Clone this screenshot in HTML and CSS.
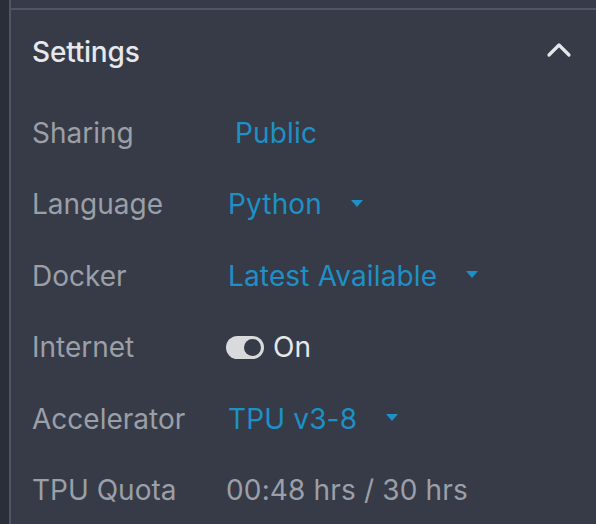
FILE: index.html
```html
<!DOCTYPE html>
<html>
<head>
<meta charset="utf-8">
<link rel="stylesheet" href="styles.css">
</head>
<body>
<div class="layout">
  <div class="rail"></div>
  <div class="panel">
    <div class="topgap"></div>
    <section class="settings">
      <header class="head">
        <h2 class="title">Settings</h2>
        <svg class="chev" width="26" height="18" viewBox="0 0 26 18"><path d="M3 14 L13 4 L23 14" fill="none" stroke="#e4e6ea" stroke-width="3.2" stroke-linecap="round" stroke-linejoin="round"/></svg>
      </header>
      <div class="rows">
        <div class="row"><span class="label">Sharing</span><span class="value link pub">Public</span></div>
        <div class="row"><span class="label">Language</span><span class="value link">Python<span class="caret"></span></span></div>
        <div class="row"><span class="label">Docker</span><span class="value link">Latest Available<span class="caret"></span></span></div>
        <div class="row"><span class="label">Internet</span><span class="value toggle-wrap"><span class="toggle"><span class="knob"></span></span><span class="on">On</span></span></div>
        <div class="row"><span class="label">Accelerator</span><span class="value link">TPU v3-8<span class="caret"></span></span></div>
        <div class="row"><span class="label">TPU Quota</span><span class="value plain">00:48 hrs / 30 hrs</span></div>
      </div>
    </section>
  </div>
</div>
</body>
</html>
```
FILE: styles.css
```css
html, body { margin: 0; padding: 0; }
body {
  background: #363b47;
  font-family: Inter, "Noto Sans", sans-serif;
  width: 596px; height: 524px; overflow: hidden;
}
.layout { display: flex; height: 524px; }
.rail { width: 9px; background: #2a2e38; flex: none; }
.panel { flex: 1; border-left: 2px solid #4f5564; background: #363b47; }
.topgap { height: 8px; }
.settings { border-top: 2px solid #4f5564; }
.head {
  display: flex; align-items: center; justify-content: space-between;
  padding: 25px 24px 0 21px; height: 34px;
}
.title { margin: 0; font-size: 28px; line-height: 34px; font-weight: 500; color: #e6e8eb; letter-spacing: -0.2px; }
.chev { margin-top: -4px; }
.rows { padding: 28px 0 0 21px; display: flex; flex-direction: column; }
.row { display: flex; align-items: center; height: 71.5px; }
.label { width: 196px; font-size: 28px; line-height: 34px; color: #9b9fa8; flex: none; }
.value { font-size: 28px; line-height: 34px; display: flex; align-items: center; letter-spacing: 0.15px; }
.link { color: #1e90c6; }
.pub { margin-left: 7px; }
.plain { color: #9b9fa8; margin-left: -2px; }
.caret {
  width: 0; height: 0; margin-left: 29px; margin-top: -2px;
  border-left: 6.5px solid transparent; border-right: 6.5px solid transparent;
  border-top: 7px solid #1e90c6;
}
.toggle-wrap { margin-left: -2px; gap: 9px; }
.toggle {
  width: 38px; height: 23px; border-radius: 12px; background: #d9dadc;
  display: flex; align-items: center; justify-content: flex-end; padding-right: 3px; box-sizing: border-box;
}
.knob { width: 17px; height: 17px; border-radius: 50%; background: #363b47; }
.on { color: #e6e8eb; }
```
